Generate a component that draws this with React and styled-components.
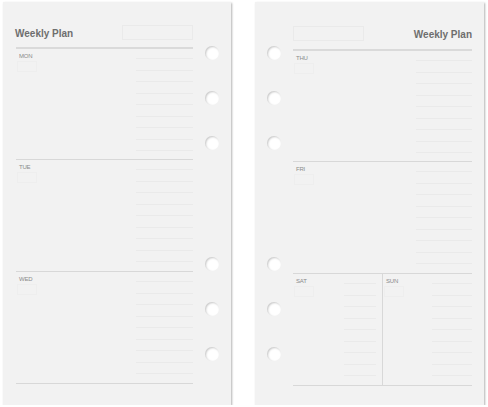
import React from "react";
import styled, { createGlobalStyle } from "styled-components";

const GlobalStyle = createGlobalStyle`
  body {
    margin: 0;
    background: #ffffff;
    font-family: "Liberation Sans", Arial, sans-serif;
  }
`;

const Spread = styled.div`
  display: flex;
  gap: 24px;
  padding: 2px 0 0 3px;
`;

const Page = styled.div`
  display: flex;
  flex-direction: ${(p) => (p.$mirror ? "row-reverse" : "row")};
  width: ${(p) => p.$width}px;
  height: 403px;
  background: #f2f2f2;
  box-shadow: 1px 1px 2px rgba(0, 0, 0, 0.3);
  padding-left: ${(p) => (p.$mirror ? 0 : 13)}px;
  padding-right: ${(p) => (p.$mirror ? 12 : 0)}px;
  box-sizing: border-box;
`;

const Content = styled.div`
  display: flex;
  flex-direction: column;
  width: ${(p) => p.$width}px;
  padding-top: ${(p) => p.$top}px;
`;

const HoleColumn = styled.div`
  width: ${(p) => p.$width}px;
  display: flex;
  flex-direction: column;
  justify-content: space-between;
  align-items: center;
  padding: 44px 0 44px;
  box-sizing: border-box;
`;

const HoleGroup = styled.div`
  display: flex;
  flex-direction: column;
  gap: 31px;
`;

const Hole = styled.div`
  width: 14px;
  height: 14px;
  border-radius: 50%;
  background: #ffffff;
  box-shadow: inset 1px 1px 2px rgba(0, 0, 0, 0.22);
`;

const Header = styled.div`
  display: flex;
  flex-direction: ${(p) => (p.$mirror ? "row-reverse" : "row")};
  justify-content: space-between;
  align-items: center;
  height: 16px;
  margin-bottom: ${(p) => p.$gap}px;
`;

const Title = styled.div`
  font-size: 10px;
  font-weight: 700;
  color: #6e6e6e;
  margin-left: ${(p) => (p.$mirror ? 0 : -1)}px;
  padding-top: 2px;
`;

const TitleBox = styled.div`
  width: 71px;
  height: 15px;
  border: 1px solid #eaeaea;
  box-sizing: border-box;
`;

const Rule = styled.div`
  height: 2px;
  background: #dadada;
`;

const Day = styled.div`
  display: flex;
  height: ${(p) => p.$height}px;
  border-bottom: 1px solid #d8d8d8;
`;

const Cell = styled.div`
  flex: 1;
  display: flex;
  border-left: ${(p) => (p.$divided ? "1px solid #d8d8d8" : "none")};
`;

const LabelBlock = styled.div`
  display: flex;
  flex-direction: column;
  padding: 4px 0 0 1px;
  gap: 1px;
`;

const Label = styled.span`
  font-size: 6px;
  color: #8a8a8a;
  letter-spacing: -0.2px;
  padding-left: 2px;
  line-height: 7px;
`;

const LabelBox = styled.div`
  width: 20px;
  height: 11px;
  border: 1px solid #eeeeee;
  box-sizing: border-box;
`;

const Lines = styled.div`
  margin-left: auto;
  margin-right: ${(p) => p.$right}px;
  width: ${(p) => p.$width}px;
  display: flex;
  flex-direction: column;
  gap: 10.5px;
  padding-top: 9px;
`;

const Line = styled.div`
  height: 1px;
  background: #eaeaea;
`;

const LineSet = ({ width, right = 0, count = 9 }) => (
  <Lines $width={width} $right={right}>
    {Array.from({ length: count }).map((_, i) => (
      <Line key={i} />
    ))}
  </Lines>
);

const DayLabel = ({ name }) => (
  <LabelBlock>
    <Label>{name}</Label>
    <LabelBox />
  </LabelBlock>
);

const Holes = ({ width }) => (
  <HoleColumn $width={width}>
    <HoleGroup>
      <Hole />
      <Hole />
      <Hole />
    </HoleGroup>
    <HoleGroup>
      <Hole />
      <Hole />
      <Hole />
    </HoleGroup>
  </HoleColumn>
);

const App = () => {
  return (
    <>
      <GlobalStyle />
      <Spread>
        <Page $width={228}>
          <Content $width={177} $top={22}>
            <Header $gap={7}>
              <Title>Weekly Plan</Title>
              <TitleBox />
            </Header>
            <Rule />
            <Day $height={110}>
              <DayLabel name="MON" />
              <LineSet width={57} />
            </Day>
            <Day $height={111}>
              <DayLabel name="TUE" />
              <LineSet width={57} />
            </Day>
            <Day $height={111}>
              <DayLabel name="WED" />
              <LineSet width={57} />
            </Day>
          </Content>
          <Holes width={38} />
        </Page>

        <Page $width={229} $mirror>
          <Content $width={179} $top={23}>
            <Header $gap={8} $mirror>
              <Title $mirror>Weekly Plan</Title>
              <TitleBox />
            </Header>
            <Rule />
            <Day $height={110}>
              <DayLabel name="THU" />
              <LineSet width={56} />
            </Day>
            <Day $height={111}>
              <DayLabel name="FRI" />
              <LineSet width={56} />
            </Day>
            <Day $height={111}>
              <Cell>
                <DayLabel name="SAT" />
                <LineSet width={32} right={6} />
              </Cell>
              <Cell $divided>
                <DayLabel name="SUN" />
                <LineSet width={40} />
              </Cell>
            </Day>
          </Content>
          <Holes width={38} />
        </Page>
      </Spread>
    </>
  );
};

export default App;
